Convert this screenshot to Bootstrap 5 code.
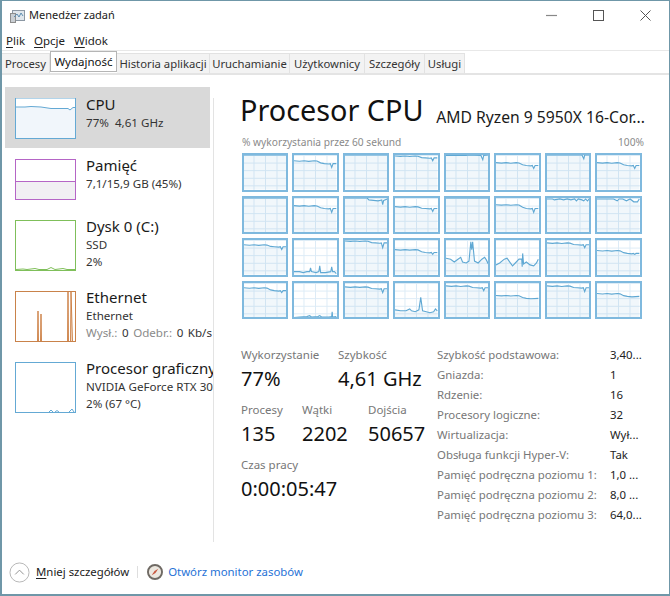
<!doctype html>
<html lang="pl">
<head>
<meta charset="utf-8">
<title>Menedżer zadań</title>
<link href="https://cdn.jsdelivr.net/npm/bootstrap@5.3.0/dist/css/bootstrap.min.css" rel="stylesheet">
<style>
html,body{height:100%;margin:0;background:#fff}
body{font-family:"Noto Sans","Open Sans","Liberation Sans",sans-serif;color:#1a1a1a;overflow:hidden}
.tm-win{width:670px;height:596px;border:1px solid #6f97a8;border-width:1px 1px 2px 2px;display:flex;flex-direction:column;background:#fff;overflow:hidden}
.tm-title{height:29px;flex:none;font-size:11px;padding-left:8px;gap:4px}
.tm-ctrl{width:47px;height:29px;display:flex;align-items:center;justify-content:center}
.tm-menu{height:20px;flex:none;font-size:11.5px;padding:2px 0 0 4px;gap:9px;align-items:center;color:#222}
.tm-menu u,.tm-more u{text-underline-offset:2px;text-decoration-thickness:1px}
.tm-tabs{height:25px;flex:none;border-top:1px solid #e8e8e8;border-bottom:2px solid #e4e4e4;padding:3px 0 0 0;flex-wrap:nowrap;align-items:flex-end}
.tm-tabs .nav-link{font-size:11.3px;line-height:19px;height:20px;padding:0 2px;background:#f3f3f3;border:1px solid #e2e2e2;border-bottom:0;border-left:0;color:#333;border-radius:0;white-space:nowrap;text-align:center}
.tm-tabs .nav-link.active{background:#fff;border:1px solid #b5b5b5;height:21px;position:relative;top:-1px;color:#111;font-size:11.5px}
.tm-main{flex:1;min-height:0}
.tm-side{width:212px;flex:none;padding:12px 0 0 3px;background:linear-gradient(#e3e3e3,#e3e3e3) right 23px/1px calc(100% - 23px) no-repeat;margin-bottom:7px;overflow:hidden}
.tm-item{display:flex;gap:10px;padding:11px 0 0 10px;width:205px;height:71px;white-space:nowrap;font-size:11.6px;line-height:16.5px;color:#333}
.tm-item.tm-two{height:61px}
.tm-item.tm-on{background:#d9d9d9}
.tm-item.tm-wide{width:208px;overflow:hidden}
.tm-name{font-size:15px;line-height:20px;color:#1a1a1a;margin-top:-4px;margin-bottom:1px}
.tm-mini{flex:none;width:61px;height:51px}
.tm-two .tm-mini{height:41px}
.tm-mini svg,.tm-cell svg{display:block;width:100%;height:100%}
.tm-gray{color:#8a8a8a}
.tm-net{word-spacing:1.5px}
.tm-info{padding:16px 0 0 26px;flex:1;min-width:0}
.tm-head{height:39px;padding-right:24px}
.tm-h1{font-size:28.8px;line-height:38px;color:#111;font-weight:400;margin:0}
.tm-sub{font-size:15.7px;line-height:22px;margin-top:15px;white-space:nowrap;color:#1a1a1a}
.tm-cap{font-size:10.2px;line-height:14px;color:#8a8a8a;width:402px;margin:5px 0 4px 2px}
.tm-grid{display:grid;grid-template-columns:repeat(8,46.3px);grid-auto-rows:38.5px;column-gap:4.2px;row-gap:4.1px;margin-left:2px;width:404px}
.tm-cell{border:2px solid #7fb9de;background-color:#fff;background-image:linear-gradient(#dcebf6 1px,transparent 1px),linear-gradient(90deg,#dcebf6 1px,transparent 1px);background-size:11.5px 7.6px;background-position:-2px 0}
.tm-stats{margin-top:28px;margin-left:1px}
.tm-left{width:196px;flex:none}
.tm-lab{font-size:11.5px;line-height:16px;color:#777;white-space:nowrap}
.tm-val{font-size:20px;line-height:27px;margin-top:2px;color:#111;white-space:nowrap}
.tm-lrow{display:flex;height:55px}
.tm-table{display:grid;grid-template-columns:173px auto;grid-auto-rows:20px;font-size:11.4px;line-height:20px;margin-top:-2px;white-space:nowrap}
.tm-table .tm-k{color:#777}
.tm-table .tm-v{color:#222}
.tm-foot{height:45px;flex:none;padding:3px 0 2px 7px;font-size:11.4px}
.tm-more{margin:0 8px 0 6px;color:#222}
.tm-sep{width:1px;height:12px;background:#dedede;margin-right:9px}
.tm-link{color:#1f72d6;text-decoration:none;margin-left:5px;font-size:11.4px}
</style>
</head>
<body>
<div class="tm-win">
  <div class="tm-title d-flex align-items-center">
    <svg width="15" height="14" viewBox="0 0 15 14" aria-hidden="true"><rect x="2.5" y="1.5" width="12" height="10" fill="#dfe6ec" stroke="#8b97a3"/><rect x="0.5" y="4.5" width="5" height="9" fill="#c9ced3" stroke="#8d8d8d"/><path d="M4 8 L7 5 L9 8 L11 4 L13 7" fill="none" stroke="#5d8db0"/></svg>
    <span>Menedżer zadań</span>
    <div class="d-flex ms-auto">
      <div class="tm-ctrl"><svg width="11" height="11" viewBox="0 0 11 11"><path d="M0 5.5H11" stroke="#888" stroke-width="1.2"/></svg></div>
      <div class="tm-ctrl"><svg width="11" height="11" viewBox="0 0 11 11"><rect x=".5" y=".5" width="10" height="10" fill="none" stroke="#555"/></svg></div>
      <div class="tm-ctrl"><svg width="11" height="11" viewBox="0 0 11 11"><path d="M.5 .5L10.5 10.5M10.5 .5L.5 10.5" stroke="#555"/></svg></div>
    </div>
  </div>
  <div class="tm-menu d-flex"><span><u>P</u>lik</span><span><u>O</u>pcje</span><span><u>W</u>idok</span></div>
  <ul class="nav tm-tabs">
    <li class="nav-item"><a class="nav-link" style="width:48px">Procesy</a></li>
    <li class="nav-item"><a class="nav-link active" style="width:67px">Wydajność</a></li>
    <li class="nav-item"><a class="nav-link" style="width:93px">Historia aplikacji</a></li>
    <li class="nav-item"><a class="nav-link" style="width:80px">Uruchamianie</a></li>
    <li class="nav-item"><a class="nav-link" style="width:75px">Użytkownicy</a></li>
    <li class="nav-item"><a class="nav-link" style="width:60px">Szczegóły</a></li>
    <li class="nav-item"><a class="nav-link" style="width:40px">Usługi</a></li>
  </ul>
  <div class="tm-main d-flex">
    <div class="tm-side">
      <div class="tm-item tm-two tm-on">
        <div class="tm-mini"><svg viewBox="0 0 61 41"><rect x=".5" y=".5" width="60" height="40" fill="#f1f6fb" stroke="#64a9d4"/><path d="M1 9H10L16 8.5L26 9L36 10.5L46 10.5L53 10.5L55 12L58 9.5L60 9.5V.5H1Z" fill="#fff"/><path d="M1 9H10L16 8.5L26 9L36 10.5L46 10.5L53 10.5L55 12L58 9.5L60 9.5" fill="none" stroke="#64a9d4"/></svg></div>
        <div><div class="tm-name">CPU</div><div>77%&nbsp; 4,61 GHz</div></div>
      </div>
      <div class="tm-item tm-two">
        <div class="tm-mini"><svg viewBox="0 0 61 41"><rect x=".5" y=".5" width="60" height="40" fill="#fff" stroke="#b565c6"/><rect x="1" y="22" width="59" height="18" fill="#f1eff3"/><path d="M1 22.5H60" stroke="#b565c6"/></svg></div>
        <div><div class="tm-name">Pamięć</div><div>7,1/15,9 GB (45%)</div></div>
      </div>
      <div class="tm-item">
        <div class="tm-mini"><svg viewBox="0 0 61 51"><rect x=".5" y=".5" width="60" height="50" fill="#fff" stroke="#7fbf5a"/><path d="M1 49.5L8 49L12 49.5L20 48.5L24 49.5L32 49.5L36 47.5L40 49.5L48 48.5L52 49.5H60" fill="none" stroke="#7fbf5a"/></svg></div>
        <div><div class="tm-name">Dysk 0 (C:)</div><div>SSD</div><div>2%</div></div>
      </div>
      <div class="tm-item">
        <div class="tm-mini"><svg viewBox="0 0 61 51"><rect x=".5" y=".5" width="60" height="50" fill="#fff" stroke="#c9824a"/><path d="M22.5 50L23 20L23.5 50M25.5 50L26 23L26.5 50M52.5 50L53 1L53.5 50M55.5 50L56 1L57.5 50" fill="#f3dcc8" stroke="#c56f2c" stroke-width=".8"/></svg></div>
        <div><div class="tm-name">Ethernet</div><div>Ethernet</div><div class="tm-net"><span class="tm-gray">Wysł.:</span> 0 <span class="tm-gray">Odebr.:</span> 0 Kb/s</div></div>
      </div>
      <div class="tm-item tm-wide">
        <div class="tm-mini"><svg viewBox="0 0 61 51"><rect x=".5" y=".5" width="60" height="50" fill="#fff" stroke="#64a9d4"/><path d="M34 50L36 48L38 50M40 50L42 48.5L44 50M54 50L57 47L59 50" fill="none" stroke="#64a9d4"/></svg></div>
        <div><div class="tm-name">Procesor graficzny</div><div>NVIDIA GeForce RTX 3090</div><div>2% (67 °C)</div></div>
      </div>
    </div>
    <div class="tm-info">
      <div class="tm-head d-flex justify-content-between">
        <h1 class="tm-h1">Procesor CPU</h1>
        <div class="tm-sub">AMD Ryzen 9 5950X 16-Cor...</div>
      </div>
      <div class="tm-cap d-flex justify-content-between"><span>% wykorzystania przez 60 sekund</span><span>100%</span></div>
      <div class="tm-grid" id="tm-grid"></div>
      <div class="tm-stats d-flex">
        <div class="tm-left">
          <div class="tm-lrow">
            <div style="width:97px"><div class="tm-lab">Wykorzystanie</div><div class="tm-val">77%</div></div>
            <div><div class="tm-lab">Szybkość</div><div class="tm-val">4,61 GHz</div></div>
          </div>
          <div class="tm-lrow">
            <div style="width:61px"><div class="tm-lab">Procesy</div><div class="tm-val">135</div></div>
            <div style="width:66px"><div class="tm-lab">Wątki</div><div class="tm-val">2202</div></div>
            <div><div class="tm-lab">Dojścia</div><div class="tm-val">50657</div></div>
          </div>
          <div class="tm-lrow">
            <div><div class="tm-lab">Czas pracy</div><div class="tm-val">0:00:05:47</div></div>
          </div>
        </div>
        <div class="tm-table">
          <div class="tm-k">Szybkość podstawowa:</div><div class="tm-v">3,40...</div>
          <div class="tm-k">Gniazda:</div><div class="tm-v">1</div>
          <div class="tm-k">Rdzenie:</div><div class="tm-v">16</div>
          <div class="tm-k">Procesory logiczne:</div><div class="tm-v">32</div>
          <div class="tm-k">Wirtualizacja:</div><div class="tm-v">Wył...</div>
          <div class="tm-k">Obsługa funkcji Hyper-V:</div><div class="tm-v">Tak</div>
          <div class="tm-k">Pamięć podręczna poziomu 1:</div><div class="tm-v">1,0 ...</div>
          <div class="tm-k">Pamięć podręczna poziomu 2:</div><div class="tm-v">8,0 ...</div>
          <div class="tm-k">Pamięć podręczna poziomu 3:</div><div class="tm-v">64,0...</div>
        </div>
      </div>
    </div>
  </div>
  <div class="tm-foot d-flex align-items-center">
    <svg width="21" height="21" viewBox="0 0 22 22" aria-hidden="true"><circle cx="11" cy="11" r="10" fill="#fff" stroke="#b5b5b5"/><path d="M6.5 13L11 8.5L15.5 13" fill="none" stroke="#8e8e8e"/></svg>
    <span class="tm-more"><u>M</u>niej szczegółów</span>
    <span class="tm-sep"></span>
    <svg width="16" height="16" viewBox="0 0 17 17" aria-hidden="true"><circle cx="8.5" cy="8.5" r="7.5" fill="#ece7df" stroke="#6f6a64" stroke-width="2"/><path d="M5 12L8 7.5L12 5L9 9.5Z" fill="#c8553d"/></svg>
    <a class="tm-link" href="#">Otwórz monitor zasobów</a>
  </div>
</div>
<script>
function t(a,b,dx,dy){
  var p=[[0,a],[6,a+.5],[11,a],[16,a+.6],[22,a],[25,a+.3],[29,(a+b)/2+.7],[33,b],[38,b+.4]];
  if(dx){p.push([dx-1.5,b],[dx,dy],[dx+1.5,b]);}
  p.push([46,b]);
  return p;
}
function n(s){return s.split(' ').map(function(q){return q.split(',').map(Number)})}
var cells=[
 [[0,0],[46,0]], t(6,9,41,13), [[0,0],[46,0]], t(1,3,41,6),
 n('0,.5 22,.5 24,0 38,.5 40,5 41,.5 46,0'), t(8,11,41,14), n('0,0 38,0 40,4 41,0 46,0'), t(8,11,41,14),
 [[0,0],[46,0]], t(8,11,41,15), n('0,0 24,0 26,2 36,3 40,2 41,7 42,2.5 46,1'), t(9,11,41,14),
 [[0,0],[46,0]], t(7,11,41,15), n('0,1 6,1 8,2 14,1 18,2 22,1 26,2 30,1 32,3 34,1 38,2 40,3 42,1 44,3 46,1'), n('0,1 4,1 14,1 18,1 22,3 24,1 28,1 32,3 36,1 40,4 44,4 46,1'),
 t(5,7,41,10), n('0,33 6,33 10,34 14,33 17,33 18,29 19,33 24,34 27,33 28,27 29,34 34,34 40,33 41,28 42,33 44,33 46,35'), t(1,3,41,8), t(10,13,41,15),
 n('0,19 5,20 9,23 13,20 16,18 18,23 22,24 25,22 27,2 28,10 29,2 31,22 35,24 39,20 42,18 44,21 46,25'), n('0,26 4,24 9,20 12,19 15,23 18,27 21,24 25,20 28,20 28.5,28 29,14 30,25 33,23 37,26 41,27 44,24 46,20'), t(3,5,41,8), t(11,14,41,15),
 t(5,8,41,10), n('0,36 6,35.5 14,35 17,34 19,35.5 26,35 28,34 30,35.5 38,35.5 41,35 41.5,30 42,35.5 46,35'), t(4,6,41,10), n('0,28 6,29 12,29 16,27 18,29 22,30 26,28 28,15 30,29 34,30 38,31 42,30 44,27 46,29'),
 t(3,5,41,8), t(13,16), t(3,5,41,9), t(11,14)
];
var g=document.getElementById('tm-grid');
g.innerHTML=cells.map(function(p){
  var s=p.map(function(q){return q[0]+','+q[1]}).join(' ');
  return '<div class="tm-cell"><svg viewBox="0 0 46 36" preserveAspectRatio="none"><polygon points="0,36 '+s+' 46,36" fill="#117dbb" fill-opacity=".06"/><polyline points="'+s+'" fill="none" stroke="#5fa8d3" stroke-width="1.2"/></svg></div>';
}).join('');
</script>
</body>
</html>
